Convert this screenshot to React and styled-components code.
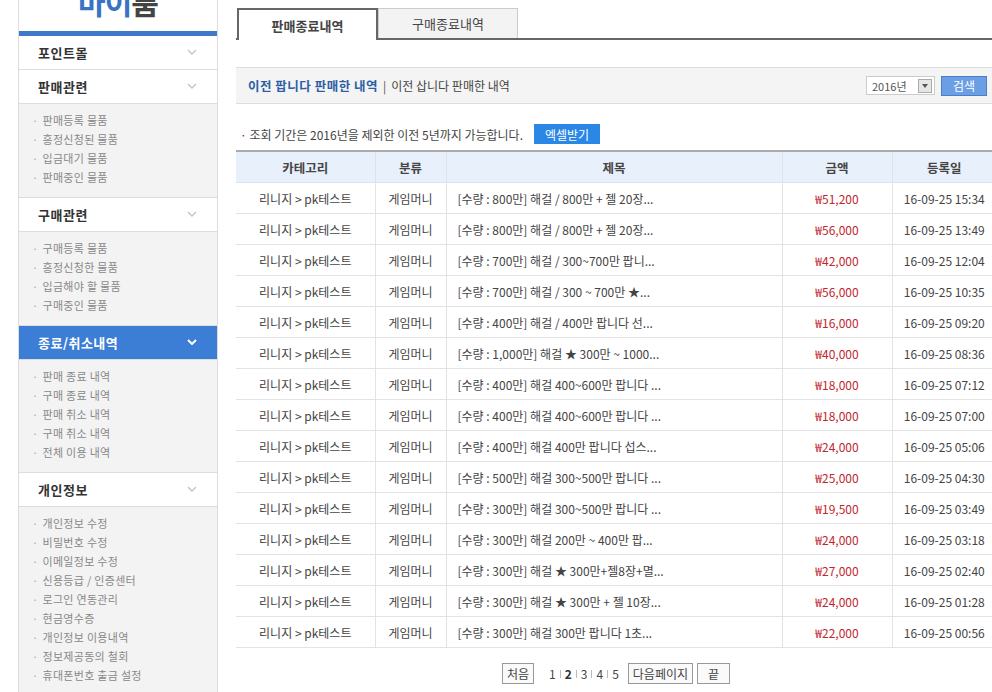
import React from "react"
import styled, { createGlobalStyle } from "styled-components"

const GlobalStyle = createGlobalStyle`
  html, body {
    margin: 0;
    padding: 0;
    background: #fff;
    overflow: hidden;
  }
  body {
    font-family: "Noto Sans CJK KR", "Noto Sans", sans-serif;
    font-size: 12px;
    color: #444;
  }
`;

const Page = styled.div`
  display: flex;
  align-items: flex-start;
  gap: 18px;
  padding-left: 18px;
  width: 1000px;
`;

/* ---------- sidebar ---------- */

const Side = styled.aside`
  width: 198px;
  flex: none;
  border-left: 1px solid #ddd;
  border-right: 1px solid #ddd;
`;

const Logo = styled.div`
  height: 31px;
  overflow: hidden;
  display: flex;
  align-items: flex-end;
  justify-content: center;
  border-bottom: 5px solid #3d78c9;
`;

const LogoText = styled.div`
  font-size: 30px;
  font-weight: 700;
  line-height: 30px;
  margin-bottom: 15px;
  letter-spacing: -1px;
  color: #444;
  span { color: #3a73c5; }
`;

const Head = styled.div`
  height: 33px;
  display: flex;
  align-items: center;
  justify-content: space-between;
  padding: 0 20px 1px 19px;
  box-sizing: border-box;
  height: 34px;
  border-bottom: 1px solid #ddd;
  font-size: 13px;
  font-weight: 700;
  letter-spacing: 0.5px;
  background: ${p => (p.$on ? "#3c7dd5" : "#fff")};
  color: ${p => (p.$on ? "#fff" : "#333")};
`;

const Sub = styled.ul`
  list-style: none;
  margin: 0;
  padding: 7px 0 10px 13px;
  background: #f3f3f3;
  border-bottom: 1px solid #ddd;
`;

const SubItem = styled.li`
  height: 19px;
  line-height: 19px;
  font-size: 11px;
  color: #888;
  letter-spacing: 0.3px;
  &::before {
    content: "·";
    color: #aaa;
    margin-right: 4px;
  }
`;

const Chevron = ({ on }) => (
  <svg width="10" height="6" viewBox="0 0 10 6">
    <polyline
      points="1,1 5,5 9,1"
      fill="none"
      stroke={on ? "#fff" : "#c4c4c4"}
      strokeWidth={on ? 2 : 1.4}
    />
  </svg>
);

const menu = [
  { title: "포인트몰" },
  { title: "판매관련", items: ["판매등록 물품", "흥정신청된 물품", "입금대기 물품", "판매중인 물품"] },
  { title: "구매관련", items: ["구매등록 물품", "흥정신청한 물품", "입금해야 할 물품", "구매중인 물품"] },
  { title: "종료/취소내역", on: true, items: ["판매 종료 내역", "구매 종료 내역", "판매 취소 내역", "구매 취소 내역", "전체 이용 내역"] },
  {
    title: "개인정보",
    items: ["개인정보 수정", "비밀번호 수정", "이메일정보 수정", "신용등급 / 인증센터", "로그인 연동관리", "현금영수증", "개인정보 이용내역", "정보제공동의 철회", "휴대폰번호 출금 설정"],
  },
];

/* ---------- main ---------- */

const Main = styled.main`
  width: 760px;
  flex: none;
  padding-top: 8px;
`;

const Tabs = styled.div`
  display: flex;
  height: 30px;
  padding-left: 1px;
  border-bottom: 2px solid #666;
`;

const Tab = styled.div`
  box-sizing: border-box;
  display: flex;
  align-items: center;
  justify-content: center;
  font-size: 13px;
  color: #444;
  ${p =>
    p.$on
      ? `
    width: 141px;
    height: 32px;
    margin-bottom: -2px;
    border: 2px solid #666;
    border-bottom: none;
    background: #fff;
    font-weight: 700;
  `
      : `
    width: 140px;
    height: 30px;
    border: 1px solid #ccc;
    border-bottom: none;
    background: #f3f3f3;
  `}
`;

const Bar = styled.div`
  margin-top: 27px;
  height: 35px;
  display: flex;
  align-items: center;
  justify-content: space-between;
  padding: 0 9px 0 12px;
  background: #f4f4f4;
  border-top: 1px solid #ddd;
  border-bottom: 1px solid #ddd;
`;

const BarTitle = styled.div`
  font-size: 12px;
  color: #444;
  b {
    color: #2d5fa6;
    font-size: 12.5px;
    letter-spacing: 0.5px;
  }
  i {
    font-style: normal;
    color: #555;
    margin: 0 5px;
  }
`;

const Controls = styled.div`
  display: flex;
  align-items: center;
  gap: 6px;
`;

const Select = styled.div`
  width: 60px;
  height: 17px;
  border: 1px solid #ccc;
  background: #fff;
  display: flex;
  align-items: center;
  justify-content: space-between;
  padding: 0 2px 0 5px;
  font-size: 11px;
  color: #555;
`;

const Arrow = styled.span`
  width: 12px;
  height: 12px;
  border: 1px solid #aaa;
  background: #e6e6e6;
  display: flex;
  align-items: center;
  justify-content: center;
  &::after {
    content: "";
    border-left: 3px solid transparent;
    border-right: 3px solid transparent;
    border-top: 4px solid #555;
  }
`;

const BlueBtn = styled.div`
  height: ${p => (p.$dark ? "20px" : "18px")};
  width: ${p => p.$w}px;
  display: flex;
  align-items: center;
  justify-content: center;
  color: #fff;
  font-size: 12px;
  background: ${p => (p.$dark ? "#2a87e6" : "#6a9fe6")};
  border: ${p => (p.$dark ? "none" : "1px solid #4a7fc8")};
`;

const Notice = styled.div`
  display: flex;
  align-items: center;
  gap: 11px;
  margin-top: 20px;
  padding-left: 4px;
  font-size: 12px;
  color: #444;
`;

const Table = styled.table`
  margin-top: 6px;
  width: 760px;
  border-collapse: collapse;
  table-layout: fixed;
  border-top: 2px solid #aaa;
  font-size: 12px;
`;

const Th = styled.th`
  height: 30px;
  padding: 0;
  background: #e8f0fb;
  color: #444;
  font-weight: 700;
  font-size: 12.5px;
  border-left: 1px solid #dde3ea;
  border-bottom: 1px solid #dde3ea;
  &:first-child { border-left: none; }
`;

const Td = styled.td`
  height: 30px;
  padding: 0 ${p => (p.$left ? "11px" : "0")};
  text-align: ${p => (p.$left ? "left" : "center")};
  color: ${p => (p.$red ? "#c1272d" : "#444")};
  border-left: 1px solid #e3e3e3;
  border-bottom: 1px solid #e3e3e3;
  white-space: nowrap;
  overflow: hidden;
  &:first-child { border-left: none; }
`;

const Pager = styled.div`
  margin-top: 15px;
  display: flex;
  justify-content: center;
  align-items: center;
  gap: 4px;
`;

const PageBtn = styled.div`
  height: 19px;
  padding: 0 ${p => p.$pad}px;
  border: 1px solid #999;
  background: #fafafa;
  display: flex;
  align-items: center;
  font-size: 12px;
  color: #444;
`;

const Nums = styled.div`
  display: flex;
  align-items: center;
  margin: 0 5px 0 11px;
  font-size: 12px;
  color: #444;
`;

const Num = styled.span`
  font-weight: ${p => (p.$on ? 700 : 400)};
  color: ${p => (p.$on ? "#333" : "#444")};
`;

const Sep = styled.span`
  width: 1px;
  height: 8px;
  background: #bbb;
  margin: 0 4px;
`;

const rows = [
  ["[수량 : 800만] 해걸 / 800만 + 젤 20장...", "₩51,200", "16-09-25 15:34"],
  ["[수량 : 800만] 해걸 / 800만 + 젤 20장...", "₩56,000", "16-09-25 13:49"],
  ["[수량 : 700만] 해걸 / 300~700만 팝니...", "₩42,000", "16-09-25 12:04"],
  ["[수량 : 700만] 해걸 / 300 ~ 700만 ★...", "₩56,000", "16-09-25 10:35"],
  ["[수량 : 400만] 해걸 / 400만 팝니다 선...", "₩16,000", "16-09-25 09:20"],
  ["[수량 : 1,000만] 해걸 ★ 300만 ~ 1000...", "₩40,000", "16-09-25 08:36"],
  ["[수량 : 400만] 해걸 400~600만 팝니다 ...", "₩18,000", "16-09-25 07:12"],
  ["[수량 : 400만] 해걸 400~600만 팝니다 ...", "₩18,000", "16-09-25 07:00"],
  ["[수량 : 400만] 해걸 400만 팝니다 섭스...", "₩24,000", "16-09-25 05:06"],
  ["[수량 : 500만] 해걸 300~500만 팝니다 ...", "₩25,000", "16-09-25 04:30"],
  ["[수량 : 300만] 해걸 300~500만 팝니다 ...", "₩19,500", "16-09-25 03:49"],
  ["[수량 : 300만] 해걸 200만 ~ 400만 팝...", "₩24,000", "16-09-25 03:18"],
  ["[수량 : 300만] 해걸 ★ 300만+젤8장+멸...", "₩27,000", "16-09-25 02:40"],
  ["[수량 : 300만] 해걸 ★ 300만 + 젤 10장...", "₩24,000", "16-09-25 01:28"],
  ["[수량 : 300만] 해걸 300만 팝니다 1초...", "₩22,000", "16-09-25 00:56"],
];

export default function App() {
  return (
    <>
      <GlobalStyle />
      <Page>
        <Side>
          <Logo>
            <LogoText><span>마이</span>룸</LogoText>
          </Logo>
          {menu.map(m => (
            <React.Fragment key={m.title}>
              <Head $on={m.on}>
                {m.title}
                <Chevron on={m.on} />
              </Head>
              {m.items && (
                <Sub>
                  {m.items.map(it => (
                    <SubItem key={it}>{it}</SubItem>
                  ))}
                </Sub>
              )}
            </React.Fragment>
          ))}
        </Side>

        <Main>
          <Tabs>
            <Tab $on>판매종료내역</Tab>
            <Tab>구매종료내역</Tab>
          </Tabs>

          <Bar>
            <BarTitle>
              <b>이전 팝니다 판매한 내역</b>
              <i>|</i>이전 삽니다 판매한 내역
            </BarTitle>
            <Controls>
              <Select>
                2016년
                <Arrow />
              </Select>
              <BlueBtn $w={44}>검색</BlueBtn>
            </Controls>
          </Bar>

          <Notice>
            <span>· 조회 기간은 2016년을 제외한 이전 5년까지 가능합니다.</span>
            <BlueBtn $dark $w={66}>엑셀받기</BlueBtn>
          </Notice>

          <Table>
            <colgroup>
              <col style={{ width: 139 }} />
              <col style={{ width: 71 }} />
              <col style={{ width: 336 }} />
              <col style={{ width: 110 }} />
              <col style={{ width: 104 }} />
            </colgroup>
            <thead>
              <tr>
                <Th>카테고리</Th>
                <Th>분류</Th>
                <Th>제목</Th>
                <Th>금액</Th>
                <Th>등록일</Th>
              </tr>
            </thead>
            <tbody>
              {rows.map((r, i) => (
                <tr key={i}>
                  <Td>리니지 &gt; pk테스트</Td>
                  <Td>게임머니</Td>
                  <Td $left>{r[0]}</Td>
                  <Td $red>{r[1]}</Td>
                  <Td>{r[2]}</Td>
                </tr>
              ))}
            </tbody>
          </Table>

          <Pager>
            <PageBtn $pad={4}>처음</PageBtn>
            <Nums>
              <Num>1</Num><Sep />
              <Num $on>2</Num><Sep />
              <Num>3</Num><Sep />
              <Num>4</Num><Sep />
              <Num>5</Num>
            </Nums>
            <PageBtn $pad={4}>다음페이지</PageBtn>
            <PageBtn $pad={10}>끝</PageBtn>
          </Pager>
        </Main>
      </Page>
    </>
  );
}
